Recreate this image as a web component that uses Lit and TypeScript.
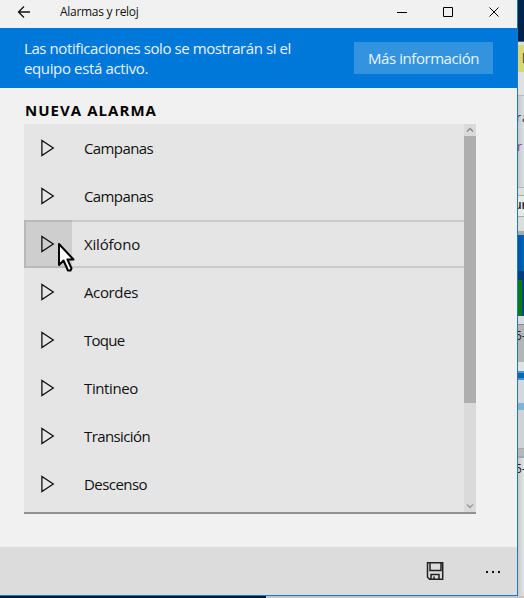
import { LitElement, html, css } from "lit";
import { customElement } from "lit/decorators.js";
import { classMap } from "lit/directives/class-map.js";

const SOUNDS = [
  { name: "Campanas", w: 69 }, { name: "Campanas", w: 69 },
  { name: "Xilófono", w: 56 }, { name: "Acordes", w: 54 },
  { name: "Toque", w: 40.5 }, { name: "Tintineo", w: 54 },
  { name: "Transición", w: 66 }, { name: "Descenso", w: 63 },
];

@customElement("fit-text")
class FitText extends LitElement {
  static properties = { text: {}, w: { type: Number } };
  declare text: string;
  declare w: number;
  static styles = css`
    :host { display: block; white-space: nowrap; }
    span { display: inline-block; }
  `;
  render() { return html`<span>${this.text}</span>`; }
  // Adjusts tracking so that the label takes its nominal width.
  updated() {
    const s = this.renderRoot.querySelector("span")!;
    s.style.letterSpacing = "";
    const base = parseFloat(getComputedStyle(s).letterSpacing) || 0;
    const d = (this.w - s.getBoundingClientRect().width) / this.text.length;
    s.style.letterSpacing = `${base + d}px`;
  }
}

@customElement("desktop-edge")
class DesktopEdge extends LitElement {
  static styles = css`
    :host { display: flex; flex-direction: column; width: 6px; height: 596px; overflow: hidden;
      font: 12px/14px "Open Sans", sans-serif; color: #222; }
    div { flex: none; overflow: hidden; white-space: nowrap; box-sizing: border-box; }
    .navy { height: 42px; background: #002349; border-bottom: 1px solid #555b62; }
    .pale { height: 3px; background: #dcdde0; }
    .yellow { height: 27px; background: #d7d873; padding: 7px 0 0 4px; font-weight: 700; color: #555; }
    .tab { height: 24px; background: #e1e1e2; border-bottom: 1px solid #bbb; }
    .page { height: 92px; background: linear-gradient(90deg, #c8c9cb, #dddde0); border-bottom: 1px solid #b5b5b5; padding-top: 15px; }
    .page span { display: block; height: 29px; margin-left: -2px; letter-spacing: -1px; }
    .page .purple { color: #77438d; margin-left: -1px; }
    .gap { height: 8px; background: #ddd; border-bottom: 1px solid #aaa; }
    .field { height: 21px; background: #e8e8e8; border-bottom: 1px solid #aaa; padding-top: 2px; font-weight: 600; }
    .field span { margin-left: -4px; }
    .below { height: 14px; background: #dcdcdc; }
    .grey { height: 4px; background: #aaa; }
    .blue { height: 36px; background: linear-gradient(90deg, #0051a0, #0067bd); }
    .deep { height: 9px; background: #003f78; }
    .green { height: 36px; background: linear-gradient(90deg, #087b16 0 4px, #0d4581 4px); }
    .light { height: 9px; background: #d9dde3; border-bottom: 1px solid #888; }
    .caption { height: 37px; background: #b5b5b5; padding-top: 4px; font-size: 12px; }
    .caption span, .last span { margin-left: -3px; }
    .strip { height: 9px; background: #e2e2e2; }
    .bar { height: 9px; background: linear-gradient(#4994d1 0 2px, #0669b7 2px 7px, #4593cf 7px); }
    .thumb { height: 23px; background: #d4d8dc; }
    .sky { height: 7px; background: #84b2d5; }
    .plain { height: 39px; background: #d2d2d4; border-bottom: 1px solid #aaa; }
    .base { height: 9px; background: #b8b8bb; border-bottom: 2px solid #9aa9bb; }
    .last { flex: 1; background: linear-gradient(90deg, #c9c9c9, #e4e4e4); padding-top: 4px; font-size: 12px; }
  `;
  render() {
    return html`
      <div class="navy"></div><div class="pale"></div><div class="yellow">l</div>
      <div class="tab"></div><div class="page"><span>r a</span><span class="purple">r</span></div>
      <div class="gap"></div><div class="field"><span>ur</span></div><div class="below"></div>
      <div class="grey"></div><div class="blue"></div><div class="deep"></div><div class="green"></div>
      <div class="light"></div><div class="caption"><span>5-</span></div><div class="strip"></div>
      <div class="bar"></div><div class="thumb"></div><div class="sky"></div><div class="plain"></div>
      <div class="base"></div><div class="last"><span>5-</span></div>`;
  }
}

@customElement("app-root")
class AppRoot extends LitElement {
  static styles = css`
    :host { display: grid; grid-template-columns: 518px 6px; grid-template-rows: 596px 2px;
      width: 524px; height: 598px; overflow: hidden; position: relative;
      font: 15px/20px "Open Sans", "Noto Sans", sans-serif; color: #111; background: #d6d6d6; }
    svg { display: block; flex: none; }
    .window { display: flex; flex-direction: column; box-sizing: border-box; background: #f1f1f1;
      border-right: 1px solid #1979ca; border-bottom: 1px solid #1979ca; }
    .title { display: flex; height: 28px; padding-left: 17px; font-size: 12px; line-height: 24px; }
    .title fit-text { margin-left: 28px; flex: 1; }
    .controls { display: flex; margin-right: 17px; }
    .banner { display: flex; height: 60px; box-sizing: border-box; background: #0078d9; color: #e8f5ff;
      padding: 10px 24px 0 24px; justify-content: space-between; }
    .more { font: inherit; color: inherit; border: 0; border-radius: 0; width: 139px; height: 32px;
      margin-top: 4px; padding: 0 14px 1px; background: #3393df; text-align: left; }
    .heading { margin: 12px 0 4px 25px; font-size: 15px; line-height: 20px; height: 20px; font-weight: 700; color: #000; }
    .list { display: flex; margin-left: 24px; width: 452px; height: 390px; box-sizing: border-box;
      background: #e5e5e5; border-bottom: 2px solid #919191; }
    .rows { flex: 1; }
    .row { display: flex; height: 48px; box-sizing: border-box; align-items: center; }
    .play { width: 48px; height: 48px; display: flex; box-sizing: border-box; }
    .row fit-text { margin-left: 12px; padding-bottom: 1px; }
    .hover { box-shadow: inset 0 2px #cacaca, inset 0 -2px #cacaca; }
    .hover .play { background: #cecece; box-shadow: inset 2px 2px #b9b9b9, inset 0 -2px #b9b9b9; }
    .scroll { width: 12px; background: #dadada; display: flex; flex-direction: column; }
    .thumb { height: 267px; background: #aeaeae; margin-bottom: auto; }
    .commands { margin-top: auto; height: 48px; background: #dcdcdc; display: flex; justify-content: flex-end; }
    .under { grid-column: 1 / 3; background: linear-gradient(90deg, #001938 266px, #c4c4c4 266px); }
    .cursor { position: absolute; left: 57px; top: 242px; }
  `;
  render() {
    return html`
      <main class="window">
        <header class="title">
          <svg width="15" height="28" fill="none" stroke="#111" stroke-width="1.3"><path d="M1.5 12H13M7 6.5L1.5 12L7 17.5"/></svg>
          <fit-text text="Alarmas y reloj" .w=${78.5}></fit-text>
          <svg class="controls" width="106" height="28" fill="none" stroke="#000"><path d="M3 12.5H13M49.5 7.5h9v9h-9zM95.5 7.5l9 9M104.5 7.5l-9 9"/></svg>
        </header>
        <section class="banner">
          <div>
            <fit-text text="Las notificaciones solo se mostrarán si el" .w=${267}></fit-text>
            <fit-text text="equipo está activo." .w=${124}></fit-text>
          </div>
          <button class="more"><fit-text text="Más información" .w=${111}></fit-text></button>
        </section>
        <div class="heading"><fit-text text="NUEVA ALARMA" .w=${132}></fit-text></div>
        <section class="list">
          <div class="rows">
            ${SOUNDS.map((s, i) => html`
              <div class=${classMap({ row: true, hover: i === 2 })}>
                <div class="play"><svg width="48" height="48" fill="none" stroke="#111" stroke-width="1.3"><path d="M17.9 16.5V31.5L29.3 24Z"/></svg></div>
                <fit-text text=${s.name} .w=${s.w}></fit-text>
              </div>`)}
          </div>
          <div class="scroll">
            <svg width="12" height="12" fill="none" stroke="#888" stroke-width="1.4"><path d="M3 7.5L6 4.5L9 7.5"/></svg>
            <div class="thumb"></div>
            <svg width="12" height="12" fill="none" stroke="#999" stroke-width="1.4"><path d="M3 4.5L6 7.5L9 4.5"/></svg>
          </div>
        </section>
        <footer class="commands">
          <svg width="97" height="48" fill="none" stroke="#222" stroke-width="1.5">
            <path d="M7.5 15.8H22.7V32.2H9.5L7.5 30Z"/><path d="M10 16V23.5H21V16M11 32V27.5H19V32M14 32V29.5"/>
            <path d="M66 25h2M72 25h2M78 25h2" stroke="#111" stroke-width="2"/>
          </svg>
        </footer>
      </main>
      <desktop-edge></desktop-edge>
      <div class="under"></div>
      <svg class="cursor" width="20" height="32"><path d="M2 2V23L6.5 18.5L11 28.5H13.5L14.5 26.5L10.5 17.5H16.5Z" fill="#fff" stroke="#000" stroke-width="2" stroke-linejoin="round"/></svg>`;
  }
}
